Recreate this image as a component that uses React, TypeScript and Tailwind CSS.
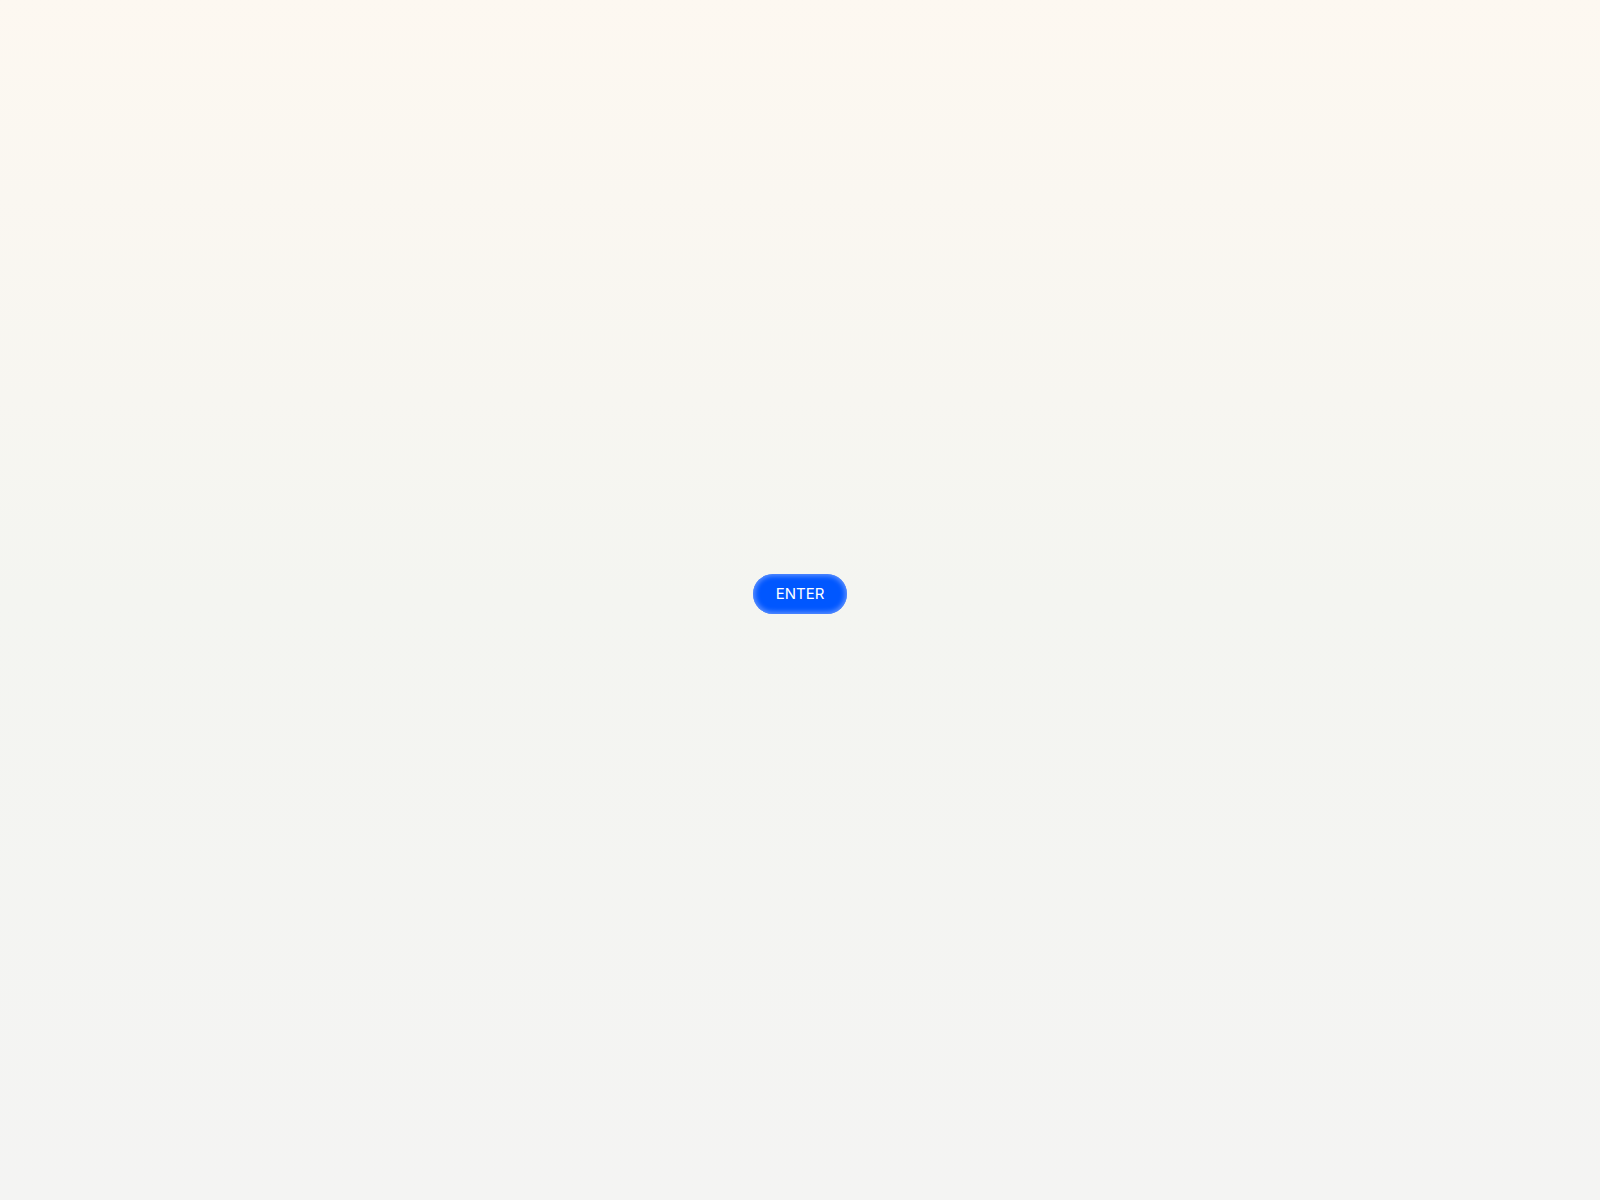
import React from 'react';

export default function App() {
  return (
    <main className="min-h-screen w-full bg-gradient-to-b from-[#fdf8f1] via-[#f4f5f1] to-[#f4f4f3] flex items-center justify-center pb-3">
      <button
        type="button"
        className="h-10 px-[23px] pt-px rounded-full bg-[#0057ff] text-white text-[15px] font-normal shadow-[inset_0_0_5px_2px_rgba(120,160,255,0.8)]"
        style={{ fontFamily: 'Inter, "Noto Sans", sans-serif' }}
      >
        ENTER
      </button>
    </main>
  );
}
